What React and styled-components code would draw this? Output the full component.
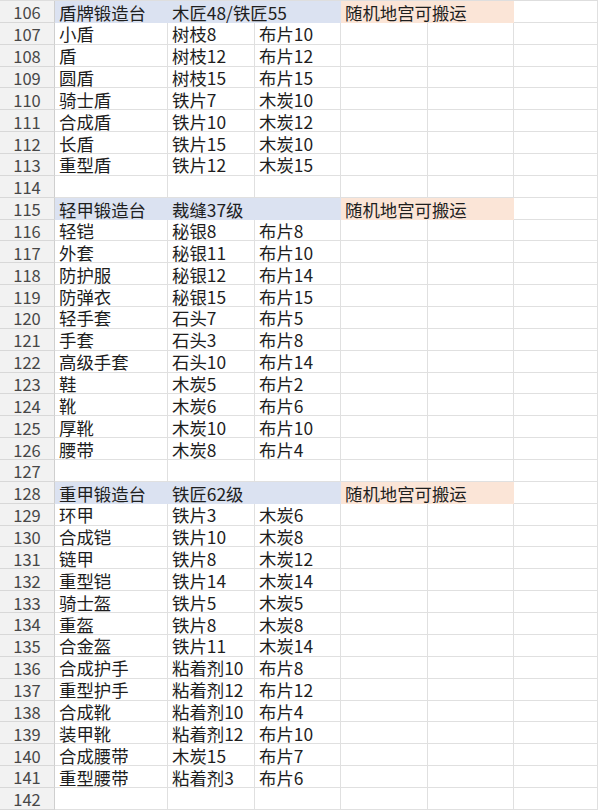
import React from 'react'
import styled, { createGlobalStyle } from 'styled-components'

const GlobalStyle = createGlobalStyle`
	body {
		margin: 0;
		background: #fff;
		font-family: "Noto Sans CJK SC", "Noto Sans", sans-serif;
	}
`

const sections = [
	{
		start: 106,
		station: '盾牌锻造台',
		need: '木匠48/铁匠55',
		note: '随机地宫可搬运',
		items: [
			['小盾', '树枝8', '布片10'],
			['盾', '树枝12', '布片12'],
			['圆盾', '树枝15', '布片15'],
			['骑士盾', '铁片7', '木炭10'],
			['合成盾', '铁片10', '木炭12'],
			['长盾', '铁片15', '木炭10'],
			['重型盾', '铁片12', '木炭15'],
		],
	},
	{
		start: 115,
		station: '轻甲锻造台',
		need: '裁缝37级',
		note: '随机地宫可搬运',
		items: [
			['轻铠', '秘银8', '布片8'],
			['外套', '秘银11', '布片10'],
			['防护服', '秘银12', '布片14'],
			['防弹衣', '秘银15', '布片15'],
			['轻手套', '石头7', '布片5'],
			['手套', '石头3', '布片8'],
			['高级手套', '石头10', '布片14'],
			['鞋', '木炭5', '布片2'],
			['靴', '木炭6', '布片6'],
			['厚靴', '木炭10', '布片10'],
			['腰带', '木炭8', '布片4'],
		],
	},
	{
		start: 128,
		station: '重甲锻造台',
		need: '铁匠62级',
		note: '随机地宫可搬运',
		items: [
			['环甲', '铁片3', '木炭6'],
			['合成铠', '铁片10', '木炭8'],
			['链甲', '铁片8', '木炭12'],
			['重型铠', '铁片14', '木炭14'],
			['骑士盔', '铁片5', '木炭5'],
			['重盔', '铁片8', '木炭8'],
			['合金盔', '铁片11', '木炭14'],
			['合成护手', '粘着剂10', '布片8'],
			['重型护手', '粘着剂12', '布片12'],
			['合成靴', '粘着剂10', '布片4'],
			['装甲靴', '粘着剂12', '布片10'],
			['合成腰带', '木炭15', '布片7'],
			['重型腰带', '粘着剂3', '布片6'],
		],
	},
]

// build flat list of rows, with a blank row after each block
const rows = []
sections.forEach(s => {
	rows.push({ n: s.start, head: s })
	s.items.forEach((it, i) => rows.push({ n: s.start + 1 + i, cells: it }))
	rows.push({ n: s.start + 1 + s.items.length, cells: [] })
})

export default function App() {
	return (
		<>
			<GlobalStyle />
			<Sheet>
				{rows.map(r => (
					<Row key={r.n}>
						<RowNum>{r.n}</RowNum>
						{r.head ? (
							<>
								<Fill span={3} color="#dbe2f1">
									<Text width="113px">{r.head.station}</Text>
									<Text>{r.head.need}</Text>
								</Fill>
								<Fill span={2} color="#fbe5d7">
									<Text>{r.head.note}</Text>
								</Fill>
								<Cell />
							</>
						) : (
							[0, 1, 2, 3, 4, 5].map(i => (
								<Cell key={i}>{r.cells[i] && <Text>{r.cells[i]}</Text>}</Cell>
							))
						)}
					</Row>
				))}
			</Sheet>
		</>
	)
}

const Sheet = styled.div`
	width: 598px;
	border-top: 1px solid #dedede;
`
const Row = styled.div`
	display: grid;
	grid-template-columns: 55px 113px 87px 86px 87px 86px 84px;
	height: 21.86px;
	box-sizing: border-box;
`
const RowNum = styled.div`
	display: flex;
	align-items: flex-end;
	justify-content: center;
	background: #f2f2f2;
	border-right: 1px solid #cfcfcf;
	border-bottom: 1px solid #d8d8d8;
	color: #474747;
	font-size: 16.5px;
	line-height: 1;
	padding-bottom: 1px;
	box-sizing: border-box;
	overflow: hidden;
`
const Cell = styled.div`
	display: flex;
	align-items: flex-end;
	border-right: 1px solid #e0e0e0;
	border-bottom: 1px solid #e0e0e0;
	box-sizing: border-box;
	white-space: nowrap;
	overflow: visible;
	min-width: 0;
`
const Fill = styled.div`
	grid-column: span ${p => p.span};
	display: flex;
	align-items: flex-end;
	background: ${p => p.color};
	white-space: nowrap;
	min-width: 0;
`
const Text = styled.span`
	display: block;
	flex: none;
	width: ${p => p.width || 'auto'};
	box-sizing: border-box;
	padding: 0 0 1px 4px;
	font-size: 17.4px;
	line-height: 1;
	color: #1e1e1e;
	white-space: nowrap;
`
